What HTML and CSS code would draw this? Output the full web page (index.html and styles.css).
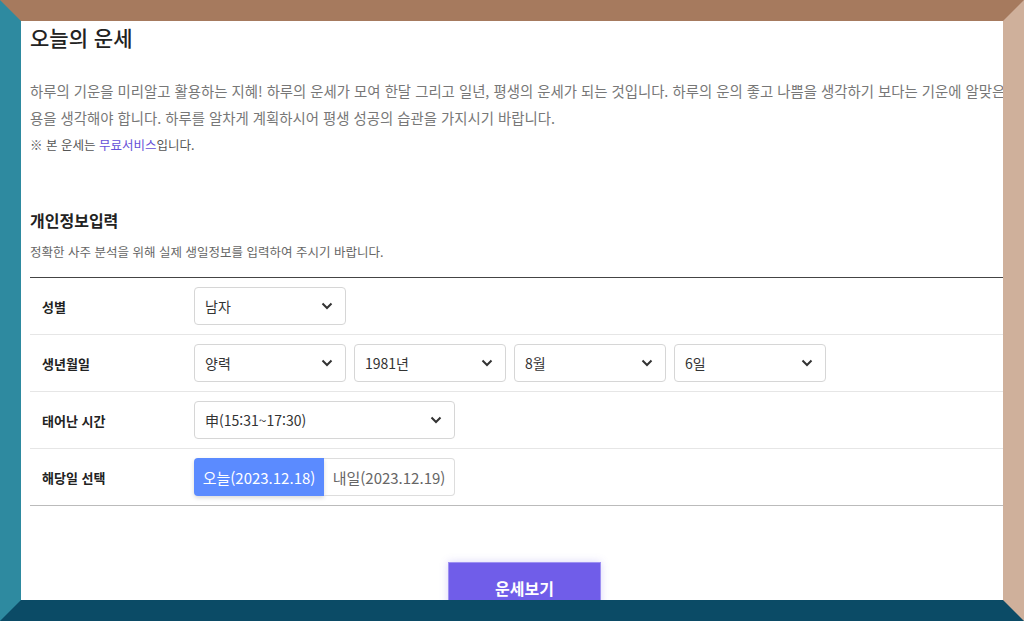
FILE: index.html
```html
<!DOCTYPE html>
<html lang="ko">
<head>
<meta charset="utf-8">
<title>오늘의 운세</title>
<link rel="stylesheet" href="styles.css">
</head>
<body>
<div class="frame">
  <div class="page">
    <h1 class="title">오늘의 운세</h1>
    <p class="desc">하루의 기운을 미리알고 활용하는 지혜! 하루의 운세가 모여 한달 그리고 일년, 평생의 운세가 되는 것입니다. 하루의 운의 좋고 나쁨을 생각하기 보다는 기운에 알맞은 내용을 생각해야 합니다. 하루를 알차게 계획하시어 평생 성공의 습관을 가지시기 바랍니다.</p>
    <p class="note">※ 본 운세는 <span class="free">무료서비스</span>입니다.</p>

    <h2 class="section-title">개인정보입력</h2>
    <p class="section-sub">정확한 사주 분석을 위해 실제 생일정보를 입력하여 주시기 바랍니다.</p>

    <div class="form">
      <div class="row">
        <div class="label">성별</div>
        <div class="controls">
          <div class="select"><span>남자</span><svg class="chev" viewBox="0 0 12 8"><path d="M1.5 1.5 6 6 10.5 1.5"/></svg></div>
        </div>
      </div>
      <div class="row">
        <div class="label">생년월일</div>
        <div class="controls">
          <div class="select"><span>양력</span><svg class="chev" viewBox="0 0 12 8"><path d="M1.5 1.5 6 6 10.5 1.5"/></svg></div>
          <div class="select"><span>1981년</span><svg class="chev" viewBox="0 0 12 8"><path d="M1.5 1.5 6 6 10.5 1.5"/></svg></div>
          <div class="select"><span>8월</span><svg class="chev" viewBox="0 0 12 8"><path d="M1.5 1.5 6 6 10.5 1.5"/></svg></div>
          <div class="select"><span>6일</span><svg class="chev" viewBox="0 0 12 8"><path d="M1.5 1.5 6 6 10.5 1.5"/></svg></div>
        </div>
      </div>
      <div class="row">
        <div class="label">태어난 시간</div>
        <div class="controls">
          <div class="select wide"><span>申(15:31~17:30)</span><svg class="chev" viewBox="0 0 12 8"><path d="M1.5 1.5 6 6 10.5 1.5"/></svg></div>
        </div>
      </div>
      <div class="row">
        <div class="label">해당일 선택</div>
        <div class="controls">
          <div class="toggle">
            <div class="opt active">오늘(2023.12.18)</div>
            <div class="opt">내일(2023.12.19)</div>
          </div>
        </div>
      </div>
    </div>

    <div class="actions">
      <div class="submit">운세보기</div>
    </div>
  </div>
</div>
</body>
</html>
```
FILE: styles.css
```css
html, body {
  margin: 0;
  padding: 0;
  background: #fff;
}

body {
  font-family: "Noto Sans CJK KR", "Noto Sans", sans-serif;
  color: #222;
}

.frame {
  width: 1024px;
  height: 621px;
  box-sizing: border-box;
  border: 21px solid;
  border-color: #a67a5e #cfb09b #0b4b66 #2e8aa0;
  background: #fff;
  overflow: hidden;
}

.page {
  width: 994px;
  margin-left: 9px;
}

.title {
  margin: 0;
  font-size: 21px;
  line-height: 32px;
  font-weight: 500;
  color: #222;
}

.desc {
  margin: 24px 0 0;
  font-size: 14.4px;
  line-height: 27px;
  color: #777;
}

.note {
  margin: 0;
  font-size: 12.5px;
  line-height: 27px;
  color: #555;
}

.free {
  color: #6650d8;
}

.section-title {
  margin: 51px 0 0;
  font-size: 16px;
  line-height: 22px;
  font-weight: 700;
  color: #222;
}

.section-sub {
  margin: 12px 0 0;
  font-size: 12.5px;
  line-height: 18px;
  color: #666;
}

.form {
  margin-top: 16px;
  border-top: 1px solid #444;
  border-bottom: 1px solid #bbb;
}

.row {
  display: grid;
  grid-template-columns: 164px 1fr;
  align-items: center;
  padding: 9px 0;
  border-bottom: 1px solid #e6e6e6;
}

.row:last-child {
  border-bottom: none;
}

.label {
  padding-left: 12px;
  font-size: 13px;
  font-weight: 700;
  color: #222;
}

.controls {
  display: flex;
  gap: 8px;
}

.select {
  width: 152px;
  height: 38px;
  box-sizing: border-box;
  border: 1px solid #d6d6d6;
  border-radius: 4px;
  padding: 0 12px 0 10px;
  display: flex;
  align-items: center;
  justify-content: space-between;
  font-size: 14px;
  color: #333;
}

.select.wide {
  width: 261px;
}

.chev {
  width: 12px;
  height: 8px;
  fill: none;
  stroke: #333;
  stroke-width: 2;
}

.toggle {
  display: flex;
  width: 261px;
  height: 38px;
}

.opt {
  flex: 1;
  display: flex;
  align-items: center;
  justify-content: center;
  font-size: 15px;
  color: #666;
  box-sizing: border-box;
  border: 1px solid #ddd;
  border-left: none;
  border-radius: 0 4px 4px 0;
}

.opt.active {
  background: #5b8bff;
  color: #fff;
  border: none;
  border-radius: 4px 0 0 4px;
  box-shadow: 0 2px 4px rgba(0, 0, 0, 0.15);
}

.actions {
  margin-top: 56px;
  padding-right: 5px;
  display: flex;
  justify-content: center;
}

.submit {
  width: 153px;
  height: 52px;
  box-sizing: border-box;
  border: 1px solid #9d90f2;
  background: #705de9;
  color: #fff;
  font-size: 16px;
  font-weight: 700;
  display: flex;
  align-items: center;
  justify-content: center;
  box-shadow: 0 0 8px rgba(112, 93, 233, 0.25);
}
```
